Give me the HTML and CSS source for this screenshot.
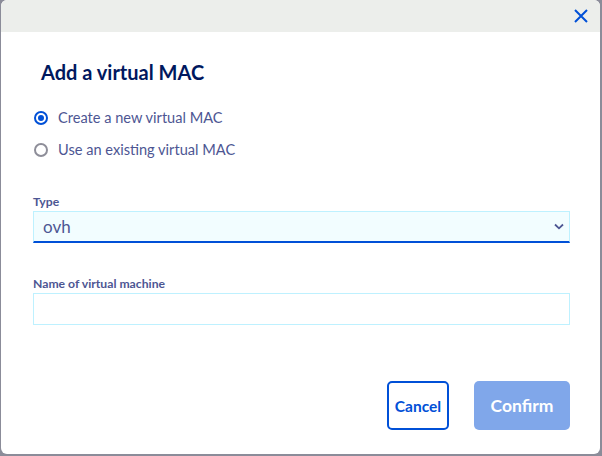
FILE: index.html
```html
<!DOCTYPE html>
<html>
<head>
<meta charset="utf-8">
<link rel="stylesheet" href="styles.css">
</head>
<body>
<div class="backdrop">
  <div class="modal">
    <div class="modal-head">
      <button class="close" aria-label="Close">
        <svg width="14" height="14" viewBox="0 0 14 14"><path d="M1 1 L13 13 M13 1 L1 13" stroke="#0050d7" stroke-width="2" fill="none"/></svg>
      </button>
    </div>
    <div class="modal-body">
      <h2 class="title">Add a virtual MAC</h2>
      <div class="radios">
        <label class="radio"><span class="dot checked"></span><span>Create a new virtual MAC</span></label>
        <label class="radio"><span class="dot"></span><span>Use an existing virtual MAC</span></label>
      </div>
      <div class="field field-type">
        <div class="label">Type</div>
        <div class="select">
          <span>ovh</span>
          <svg width="10" height="7" viewBox="0 0 10 7"><path d="M1 1.5 L5 5.3 L9 1.5" stroke="#4d5693" stroke-width="1.8" fill="none"/></svg>
        </div>
      </div>
      <div class="field field-name">
        <div class="label">Name of virtual machine</div>
        <div class="input"></div>
      </div>
      <div class="actions">
        <button class="btn btn-cancel">Cancel</button>
        <button class="btn btn-confirm">Confirm</button>
      </div>
    </div>
  </div>
</div>
</body>
</html>
```

FILE: styles.css
```css
html, body {
  margin: 0;
  padding: 0;
  width: 602px;
  height: 456px;
  overflow: hidden;
}
body {
  background: #8b8c99;
  font-family: "Source Sans Pro", "Lato", "Noto Sans", sans-serif;
}
.backdrop {
  padding: 0 2px 2px 1px;
  height: 454px;
}
.modal {
  background: #fff;
  border-radius: 6px;
  height: 454px;
  overflow: hidden;
  display: flex;
  flex-direction: column;
}
.modal-head {
  height: 32px;
  background: #eceeeb;
  display: flex;
  justify-content: flex-end;
  align-items: center;
  padding-right: 12px;
}
.close {
  border: 0;
  background: none;
  padding: 0;
  width: 14px;
  height: 14px;
  display: flex;
}
.modal-body {
  padding: 0 30px 0 32px;
}
.title {
  margin: 27px 0 0 8px;
  font-size: 20px;
  font-weight: 700;
  color: #00185e;
  line-height: 26px;
}
.radios {
  margin-top: 22px;
  display: flex;
  flex-direction: column;
  gap: 10px;
}
.radio {
  display: flex;
  align-items: center;
  gap: 10px;
  font-size: 14.6px;
  color: #4d5693;
  line-height: 22px;
  padding-left: 1px;
}
.dot {
  width: 10px;
  height: 10px;
  border: 2px solid #8e8e99;
  border-radius: 50%;
  box-sizing: content-box;
  position: relative;
  flex: none;
}
.dot.checked {
  border-color: #0050d7;
}
.dot.checked::after {
  content: "";
  position: absolute;
  left: 2px;
  top: 2px;
  width: 6px;
  height: 6px;
  border-radius: 50%;
  background: #0050d7;
}
.field {
  display: flex;
  flex-direction: column;
}
.field-type {
  margin-top: 34px;
}
.field-name {
  margin-top: 34px;
}
.label {
  font-size: 12.2px;
  font-weight: 700;
  color: #4d5693;
  line-height: 14px;
  margin-bottom: 2px;
}
.select {
  box-sizing: border-box;
  height: 32px;
  background: #f2fdff;
  border: 1px solid #bef1ff;
  border-bottom: 2px solid #0050d7;
  display: flex;
  align-items: center;
  justify-content: space-between;
  padding: 0 5px 0 9px;
  font-size: 17px;
  color: #4d5693;
}
.input {
  height: 32px;
  box-sizing: border-box;
  border: 1px solid #bef1ff;
  background: #fff;
}
.actions {
  margin-top: 56px;
  display: flex;
  justify-content: flex-end;
  gap: 25px;
}
.btn {
  height: 49px;
  border-radius: 5px;
  font-family: inherit;
  font-weight: 700;
  padding: 0;
}
.btn-cancel {
  width: 62px;
  border: 2px solid #0050d7;
  background: #fff;
  color: #0050d7;
  font-size: 15.5px;
}
.btn-confirm {
  width: 96px;
  border: 0;
  background: #80a7ea;
  color: #fff;
  font-size: 17.5px;
}
```
